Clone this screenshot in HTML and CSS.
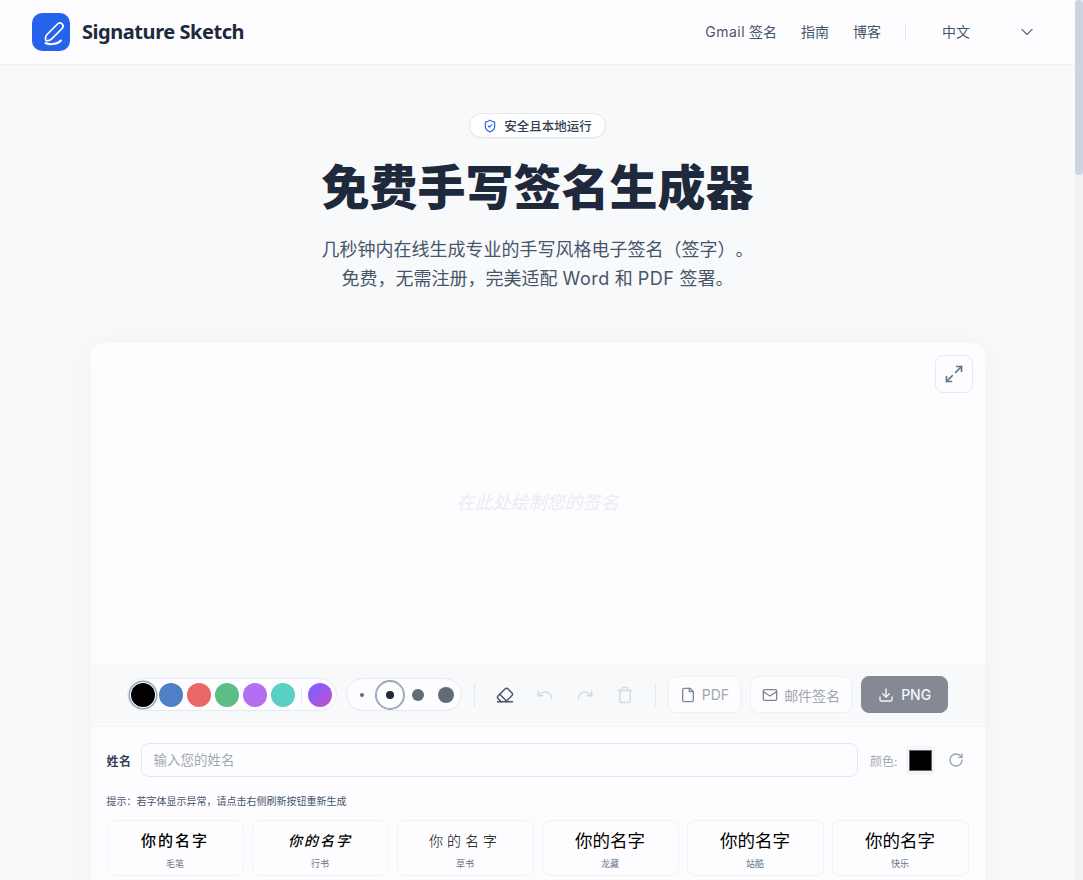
FILE: index.html
```html
<!DOCTYPE html>
<html lang="zh-CN">
  <head>
    <meta charset="UTF-8" />
    <meta name="viewport" content="width=device-width, initial-scale=1.0" />
    <title>Signature Sketch</title>
    <link rel="stylesheet" href="styles.css">
  </head>
  <body>
    <header class="site-header">
      <a class="brand" href="#">
        <span class="brand-mark">
          <svg width="38" height="38" viewBox="0 0 38 38" fill="none" stroke="#fff" stroke-width="1.7" stroke-linecap="round" stroke-linejoin="round">
            <path d="M15 21.500 25.500 11a3.200 3.200 0 0 1 4.600 4.500L19.500 26.200c-1.500 1.500-5 1.800-5.700 1.100-.7-1-.3-4.300 1.200-5.800Z" />
            <path d="M13.500 30c3 1.500 11 2.300 15.500-2.500" stroke-width="2" />
          </svg>
        </span>
        <span class="brand-name">Signature Sketch</span>
      </a>
      <nav class="site-nav">
        <a href="#"><span class="latin">Gmail</span> 签名</a>
        <a href="#">指南</a>
        <a href="#">博客</a>
        <span class="nav-divider"></span>
        <div class="lang-select">
          <span>中文</span>
          <svg width="14" height="14" viewBox="0 0 14 14" fill="none" stroke="#64748b" stroke-width="1.3" stroke-linecap="round" stroke-linejoin="round"><path d="m2 4.500 5 5 5-5" /></svg>
        </div>
      </nav>
    </header>

    <main class="page">
      <section class="hero">
        <div class="badge">
          <svg width="14" height="14" viewBox="0 0 24 24" fill="none" stroke="#2563eb" stroke-width="2" stroke-linecap="round" stroke-linejoin="round">
            <path d="M20 13c0 5-3.500 7.500-7.700 9a1 1 0 0 1-.6 0C7.500 20.500 4 18 4 13V6a1 1 0 0 1 1-1c2 0 4.500-1.200 6.200-2.700a1.200 1.200 0 0 1 1.600 0C14.500 3.800 17 5 19 5a1 1 0 0 1 1 1Z" />
            <path d="m9 12 2 2 4-4" />
          </svg>
          <span>安全且本地运行</span>
        </div>
        <h1>免费手写签名生成器</h1>
        <p class="lead">几秒钟内在线生成专业的手写风格电子签名（签字）。<br>免费，无需注册，完美适配 <span class="latin">Word</span> 和 <span class="latin">PDF</span> 签署。</p>
      </section>

      <section class="editor">
        <div class="canvas-area">
          <button class="expand-btn" type="button" aria-label="全屏">
            <svg width="20" height="20" viewBox="0 0 24 24" fill="none" stroke="#64748b" stroke-width="2" stroke-linecap="round" stroke-linejoin="round">
              <path d="M15 3h6v6" /><path d="m21 3-7 7" /><path d="m3 21 7-7" /><path d="M9 21H3v-6" />
            </svg>
          </button>
          <p class="canvas-hint">在此处绘制您的签名</p>
        </div>

        <div class="toolbar">
          <div class="pickers">
            <div class="pill colors">
              <span class="swatch swatch-active black"></span>
              <span class="swatch blue"></span>
              <span class="swatch red"></span>
              <span class="swatch green"></span>
              <span class="swatch purple"></span>
              <span class="swatch teal"></span>
              <span class="pill-divider"></span>
              <span class="swatch custom"></span>
            </div>
            <div class="pill sizes">
              <span class="size"><i class="dot dot-1"></i></span>
              <span class="size size-active"><i class="dot dot-2"></i></span>
              <span class="size"><i class="dot dot-3"></i></span>
              <span class="size"><i class="dot dot-4"></i></span>
            </div>
          </div>
          <span class="tool-divider"></span>
          <div class="tools">
            <svg class="tool tool-on" viewBox="0 0 24 24"><path d="m7 21-4.300-4.300c-1-1-1-2.500 0-3.400l9.600-9.600c1-1 2.500-1 3.400 0l5.600 5.600c1 1 1 2.500 0 3.400L13 21" /><path d="M2 21h20" /><path d="m5 11 9 9" /></svg>
            <svg class="tool" viewBox="0 0 24 24"><path d="M3 7v6h6" /><path d="M21 17a9 9 0 0 0-9-9 9 9 0 0 0-6 2.300L3 13" /></svg>
            <svg class="tool" viewBox="0 0 24 24"><path d="M21 7v6h-6" /><path d="M3 17a9 9 0 0 1 9-9 9 9 0 0 1 6 2.300l3 2.700" /></svg>
            <svg class="tool" viewBox="0 0 24 24"><path d="M3 6h18" /><path d="M19 6v14a2 2 0 0 1-2 2H7a2 2 0 0 1-2-2V6" /><path d="M8 6V4a2 2 0 0 1 2-2h4a2 2 0 0 1 2 2v2" /></svg>
          </div>
          <span class="tool-divider"></span>
          <div class="actions">
            <button class="btn" type="button">
              <svg viewBox="0 0 24 24"><path d="M15 2H6a2 2 0 0 0-2 2v16a2 2 0 0 0 2 2h12a2 2 0 0 0 2-2V7Z" /><path d="M14 2v5h6" /></svg>
              PDF
            </button>
            <button class="btn" type="button">
              <svg viewBox="0 0 24 24"><rect x="2" y="4" width="20" height="16" rx="2" /><path d="m22 7-10 6.500L2 7" /></svg>
              邮件签名
            </button>
            <button class="btn btn-primary" type="button">
              <svg viewBox="0 0 24 24"><path d="M21 15v4a2 2 0 0 1-2 2H5a2 2 0 0 1-2-2v-4" /><path d="m7 10 5 5 5-5" /><path d="M12 15V3" /></svg>
              PNG
            </button>
          </div>
        </div>

        <div class="name-panel">
          <div class="name-row">
            <label for="name">姓名</label>
            <input id="name" type="text" placeholder="输入您的姓名" />
            <div class="color-group">
              <span class="color-label">颜色:</span>
              <span class="color-input"><i></i></span>
              <span class="refresh">
                <svg viewBox="0 0 24 24"><path d="M21 12a9 9 0 1 1-9-9c2.520 0 4.930 1 6.740 2.740L21 8" /><path d="M21 3v5h-5" /></svg>
              </span>
            </div>
          </div>
          <p class="tip">提示：若字体显示异常，请点击右侧刷新按钮重新生成</p>
          <div class="font-grid">
            <div class="font-card"><span class="sample sample-brush">你的名字</span><small>毛笔</small></div>
            <div class="font-card"><span class="sample sample-run">你的名字</span><small>行书</small></div>
            <div class="font-card"><span class="sample sample-grass">你的名字</span><small>草书</small></div>
            <div class="font-card"><span class="sample">你的名字</span><small>龙藏</small></div>
            <div class="font-card"><span class="sample">你的名字</span><small>站酷</small></div>
            <div class="font-card"><span class="sample">你的名字</span><small>快乐</small></div>
          </div>
        </div>
      </section>
    </main>

    <div class="scroll-track" aria-hidden="true"><div class="scroll-thumb"></div></div>
  </body>
</html>
```
FILE: styles.css
```css
* {
  box-sizing: border-box;
}
body {
  margin: 0;
  padding-right: 8px;
  background-color: #f8f9fb;
  color: #1e293b;
  font-family: Inter, "Noto Sans CJK SC", sans-serif;
  text-spacing-trim: space-all;
}
a {
  color: inherit;
  text-decoration: none;
}
.latin {
  letter-spacing: 0.5px;
}
.scroll-track {
  position: fixed;
  top: 0;
  right: 0;
  bottom: 0;
  width: 8px;
  background-color: #f1f2f4;
}
.scroll-thumb {
  height: 175px;
  background-color: #cbd5e1;
  border-radius: 4px;
}
.site-header {
  height: 65px;
  padding: 0 32px;
  display: flex;
  align-items: center;
  justify-content: space-between;
  background-color: #fdfdff;
  border-bottom: 1px solid #eef0f4;
}
.brand {
  display: flex;
  align-items: center;
  gap: 12px;
}
.brand-mark {
  width: 38px;
  height: 38px;
  border-radius: 10px;
  background-color: #2563eb;
  display: flex;
}
.brand-name {
  margin-bottom: 2px;
  font-family: "Noto Sans", sans-serif;
  font-size: 20px;
  font-weight: 700;
  letter-spacing: -0.45px;
}
.site-nav {
  display: flex;
  align-items: center;
  gap: 24px;
  font-size: 14px;
  color: #475569;
}
.site-nav a,
.lang-select span {
  margin-bottom: 2px;
}
.nav-divider {
  width: 1px;
  height: 16px;
  background-color: #e2e8f0;
}
.lang-select {
  width: 113px;
  padding: 0 9px 0 12px;
  display: flex;
  align-items: center;
  justify-content: space-between;
}
.hero {
  padding-top: 48px;
  text-align: center;
}
.badge {
  display: inline-flex;
  align-items: center;
  gap: 7px;
  height: 25px;
  padding: 0 13px;
  background-color: #fff;
  border: 1px solid #e2e8f0;
  border-radius: 13px;
  box-shadow: 0 1px 2px rgba(15, 23, 42, 0.04);
  font-size: 12.5px;
  font-weight: 500;
  color: #334155;
}
h1 {
  margin: 15px 0 0;
  font-size: 48px;
  line-height: 70px;
  font-weight: 800;
  color: #1e293b;
}
.lead {
  margin: 12px 0 0;
  font-size: 18px;
  line-height: 29px;
  color: #475569;
}
.editor {
  width: 894px;
  margin: 50px auto 0;
  background-color: #fdfdff;
  border-radius: 12px;
  box-shadow: 0 5px 34px rgba(15, 23, 42, 0.04);
}
.canvas-area {
  position: relative;
  height: 320px;
  display: flex;
  align-items: center;
  justify-content: center;
}
.expand-btn {
  position: absolute;
  top: 12px;
  right: 12px;
  width: 38px;
  height: 38px;
  padding: 0;
  display: flex;
  align-items: center;
  justify-content: center;
  background-color: #fdfdff;
  border: 1px solid #e6e9ef;
  border-radius: 8px;
}
.canvas-hint {
  margin: 0 0 4px;
  font-size: 18px;
  font-style: italic;
  color: #eaecf1;
}
.toolbar {
  height: 64px;
  display: flex;
  align-items: center;
  justify-content: center;
  gap: 12px;
  background-color: #f8f9fb;
  border-bottom: 1px solid #f1f3f6;
}
.pickers {
  display: flex;
  gap: 9px;
}
.pill {
  height: 33px;
  display: flex;
  align-items: center;
  background-color: #fdfdff;
  border: 1px solid #e6e9ef;
  border-radius: 17px;
}
.colors {
  gap: 4px;
  padding: 0 4px 0 3px;
}
.swatch {
  width: 24px;
  height: 24px;
  border-radius: 50%;
}
.swatch-active {
  box-shadow: 0 0 0 1px #fff, 0 0 0 2.5px #94a3b8;
}
.black { background-color: #000; }
.blue { background-color: #4d80c4; }
.red { background-color: #e96767; }
.green { background-color: #5cbe86; }
.purple { background-color: #b26ff0; }
.teal { background-color: #5ad0c4; }
.custom {
  background: linear-gradient(135deg, #8b5cf6 35%, #c951c0);
}
.pill-divider {
  width: 1px;
  height: 16px;
  margin: 0 2px;
  background-color: #e2e8f0;
}
.sizes {
  padding: 0 1px;
}
.size {
  width: 28px;
  height: 28px;
  display: flex;
  align-items: center;
  justify-content: center;
  border-radius: 50%;
}
.size-active {
  box-shadow: 0 0 0 1px #94a3b8, inset 0 0 0 1px #94a3b8;
}
.dot {
  display: block;
  border-radius: 50%;
  background-color: #646b78;
}
.dot-1 { width: 4px; height: 4px; }
.dot-2 { width: 8px; height: 8px; background-color: #1e293b; }
.dot-3 { width: 12px; height: 12px; }
.dot-4 { width: 16px; height: 16px; }
.tool-divider {
  width: 1px;
  height: 24px;
  background-color: #e2e8f0;
}
.tools {
  display: flex;
  align-items: center;
  gap: 22px;
  padding: 0 9px;
}
.tool {
  width: 18px;
  height: 18px;
  fill: none;
  stroke: #d5dae2;
  stroke-width: 2;
  stroke-linecap: round;
  stroke-linejoin: round;
}
.tool-on {
  stroke: #475569;
}
.actions {
  display: flex;
  gap: 9px;
}
.btn {
  height: 37px;
  padding: 0 11px;
  display: flex;
  align-items: center;
  gap: 6px;
  font: inherit;
  font-size: 14px;
  color: #a0a6b1;
  background-color: #fdfdff;
  border: 1px solid #eef0f4;
  border-radius: 8px;
}
.btn svg {
  width: 16px;
  height: 16px;
  fill: none;
  stroke: #7e8693;
  stroke-width: 2;
  stroke-linecap: round;
  stroke-linejoin: round;
}
.btn-primary {
  padding: 0 16px;
  gap: 7px;
  font-weight: 500;
  color: #f6f7f9;
  background-color: #858994;
  border-color: #858994;
}
.btn-primary svg {
  stroke: #f6f7f9;
}
.name-panel {
  padding: 16px;
}
.name-row {
  display: flex;
  align-items: center;
  gap: 9px;
}
.name-row label {
  font-size: 12px;
  font-weight: 700;
  letter-spacing: 0.5px;
  color: #334155;
}
.name-row input {
  flex-grow: 1;
  height: 34px;
  padding: 0 12px;
  font: inherit;
  font-size: 13.5px;
  background-color: #fdfdff;
  border: 1px solid #e2e8f0;
  border-radius: 8px;
}
.name-row input::placeholder {
  color: #a0a8b5;
}
.color-group {
  display: flex;
  align-items: center;
  gap: 8px;
  margin-left: 3px;
}
.color-label {
  font-size: 12px;
  color: #a0a8b5;
}
.color-input {
  width: 29px;
  height: 29px;
  padding: 4px 3px;
  background-color: #f4f5f8;
  border-radius: 4px;
}
.color-input i {
  display: block;
  height: 100%;
  background-color: #000;
  border: 1px solid #666;
}
.refresh {
  width: 26px;
  height: 27px;
  display: flex;
  align-items: center;
  justify-content: center;
}
.refresh svg {
  width: 16px;
  height: 16px;
  fill: none;
  stroke: #94a3b8;
  stroke-width: 2;
  stroke-linecap: round;
  stroke-linejoin: round;
}
.tip {
  margin: 17px 0 12px;
  font-size: 10px;
  line-height: 14px;
  color: #475569;
}
.font-grid {
  display: grid;
  grid-template-columns: repeat(6, 1fr);
  gap: 8px;
}
.font-card {
  height: 56px;
  padding-top: 9px;
  display: flex;
  flex-direction: column;
  align-items: center;
  background-color: #fdfdff;
  border: 1px solid #f1f3f6;
  border-radius: 8px;
}
.sample {
  font-size: 17.5px;
  line-height: 22px;
  color: #000;
}
.sample-brush {
  font-size: 15px;
  font-weight: 500;
  letter-spacing: 2px;
}
.sample-run {
  font-size: 14px;
  font-weight: 500;
  font-style: italic;
  letter-spacing: 2px;
}
.sample-grass {
  font-size: 14px;
  font-weight: 300;
  letter-spacing: 4px;
}
.font-card small {
  margin-top: 6px;
  font-size: 9px;
  line-height: 12px;
  color: #64748b;
}
```
